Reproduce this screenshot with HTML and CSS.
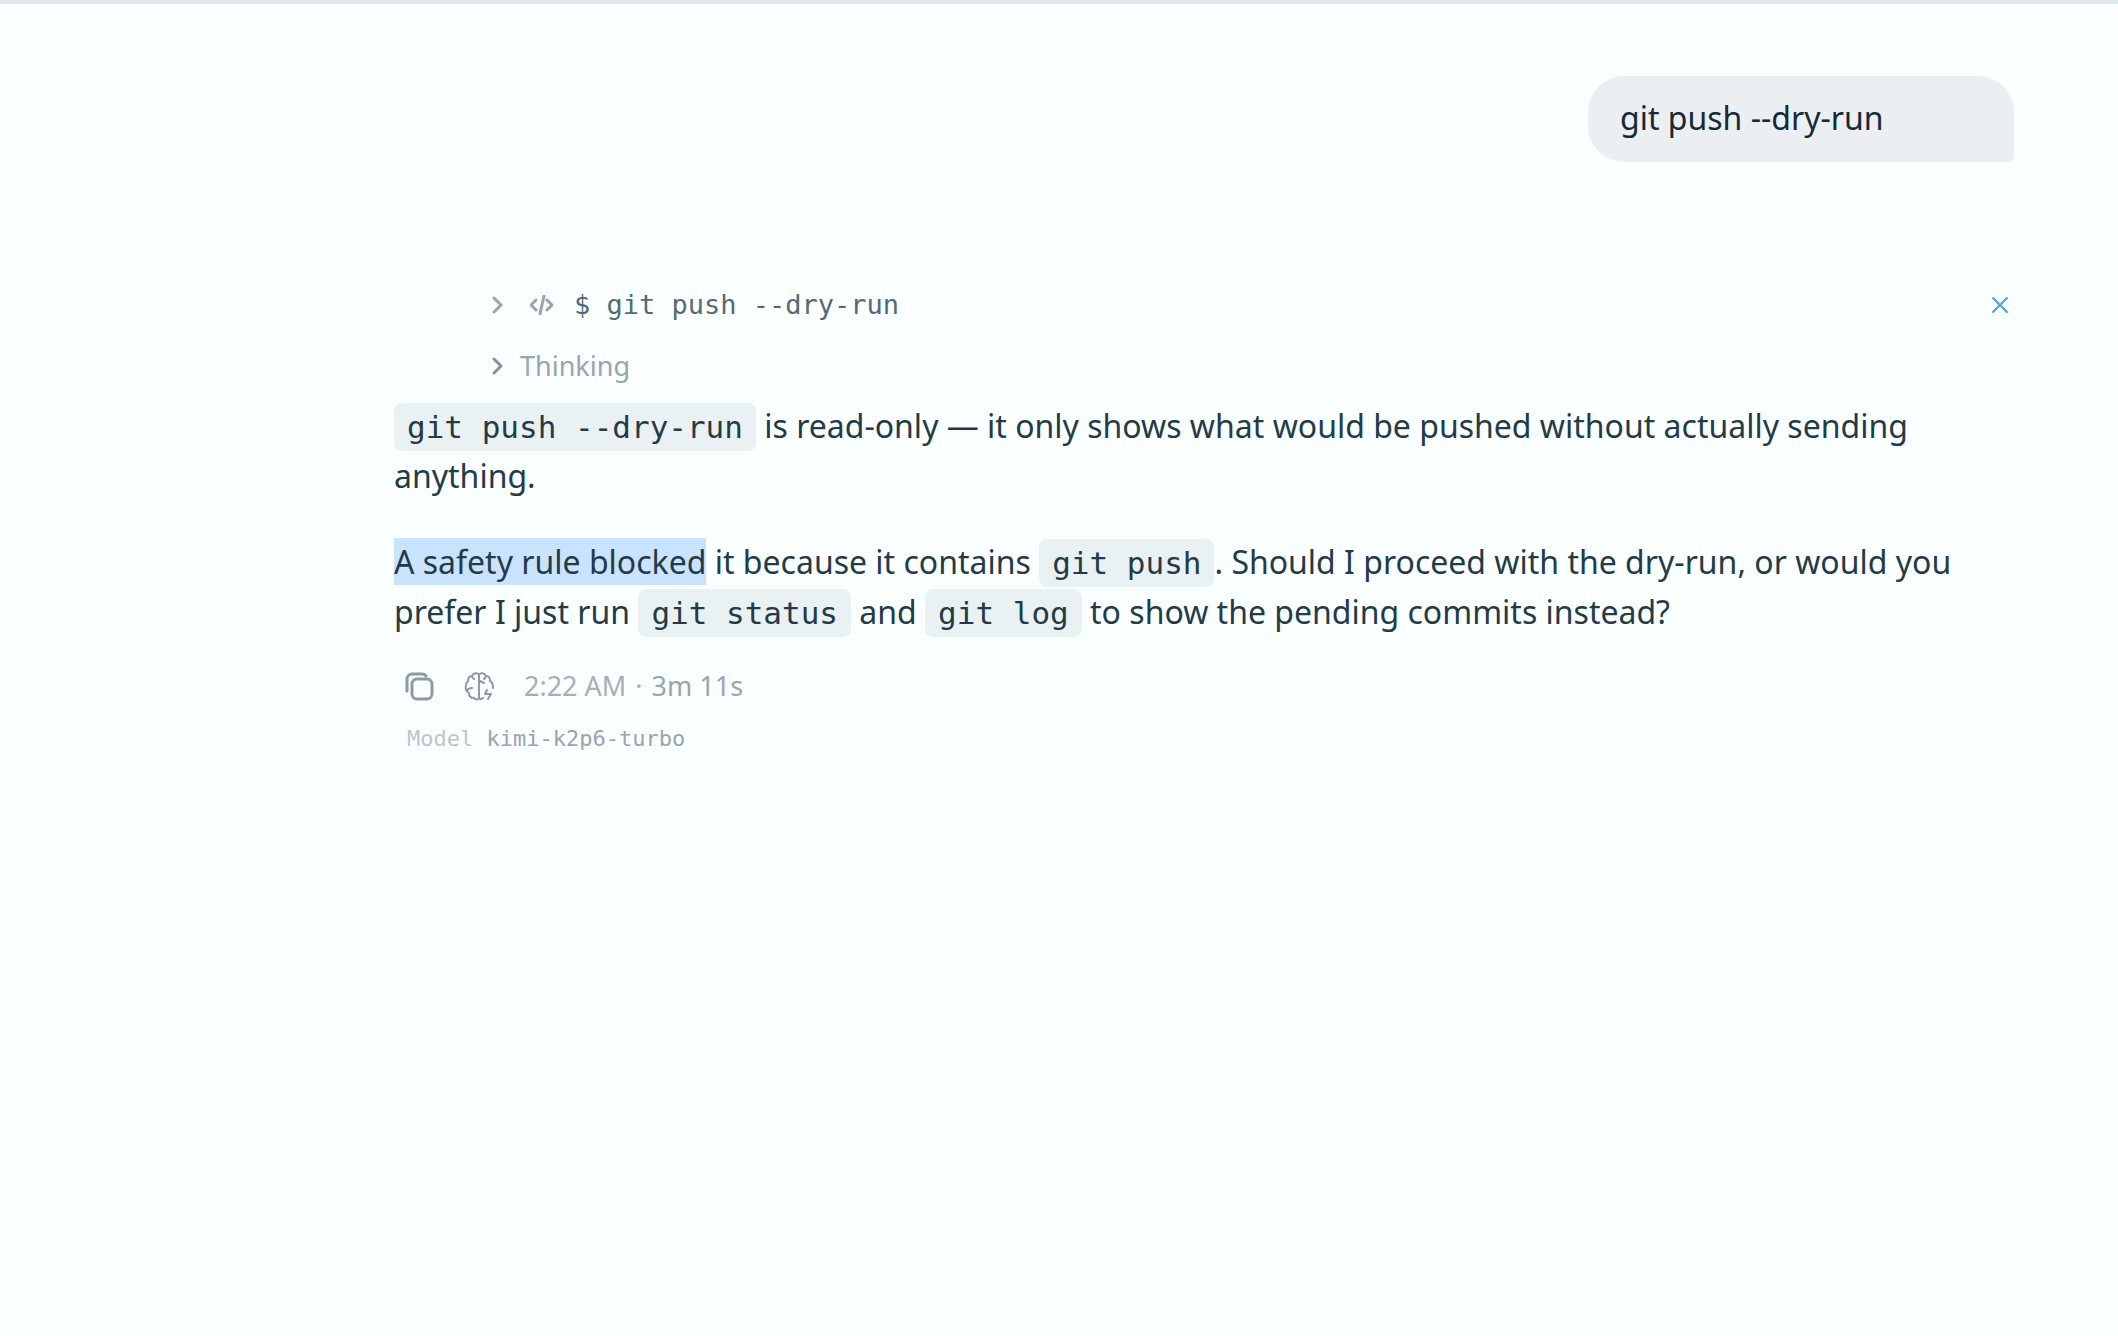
FILE: index.html
```
<!DOCTYPE html>
<html lang="en">
<head>
	<meta charset="UTF-8">
	<title>Chat</title>
	<meta name="viewport" content="width=device-width, initial-scale=1">
	<link rel="stylesheet" href="styles.css">
</head>
<body>
	<main class="chat">
		<div class="user-message">git push --dry-run</div>

		<article class="reply">
			<div class="steps">
				<div class="step">
					<button class="step-toggle tool" type="button">
						<svg class="chevron" viewBox="0 0 12 18"><path d="M2 2l7 7-7 7"/></svg>
						<svg class="code-icon" viewBox="0 0 24 20"><path d="M6 5L1 10l5 5M17 5l5 5-5 5M14 1l-4 18"/></svg>
						<span>$ git push --dry-run</span>
					</button>
					<button class="close" type="button" aria-label="Dismiss">
						<svg viewBox="0 0 18 18"><path d="M2 2l14 14M16 2L2 16"/></svg>
					</button>
				</div>
				<div class="step">
					<button class="step-toggle thinking" type="button">
						<svg class="chevron" viewBox="0 0 12 18"><path d="M2 2l7 7-7 7"/></svg>
						<span>Thinking</span>
					</button>
				</div>
			</div>

			<div class="text">
				<p><code>git push --dry-run</code> is read-only — it only shows what would be pushed without actually sending anything.</p>
				<p><mark>A safety rule blocked</mark> it because it contains <code>git push</code>. Should I proceed with the dry-run, or would you prefer I just run <code>git status</code> and <code>git log</code> to show the pending commits instead?</p>
			</div>

			<footer class="meta">
				<button class="icon-button copy" type="button" aria-label="Copy">
					<svg viewBox="0 0 30 30"><rect x="8" y="8" width="20" height="20" rx="5"/><path d="M3 20V8a5 5 0 0 1 5-5h10q3 0 4 2"/></svg>
				</button>
				<button class="icon-button" type="button" aria-label="Reasoning">
					<svg viewBox="0 0 30 30"><path d="M15 3v24c-1 2-4 2-5 0-3 0-5-2-5-5-3-1-4-5-3-8 0-2 1-3 2-4 0-3 1-5 4-5 1-3 6-4 7-1 1-3 6-2 7 1 3 0 4 2 4 5 2 1 3 4 3 7M3 20c1-3 3-3 5-3M8 5q0 2 2 3M16 10l4 2M22 5q-1 2-2 3M15 27q2 2 4 0"/><path d="M23 19l-2 4h6l-3 5"/></svg>
				</button>
				<time>2:22 AM</time>
				<span class="dot">·</span>
				<span class="duration">3m 11s</span>
			</footer>
			<div class="model">Model <span>kimi-k2p6-turbo</span></div>
		</article>
	</main>
</body>
</html>
```
FILE: styles.css
```
* {
	box-sizing: border-box;
}

body {
	margin: 0;
	min-height: 100vh;
	background: #faffff;
	color: #243b47;
	border-top: 4px solid #dbe8ec;
	font-family: "Noto Sans", sans-serif;
	font-size: 32px;
	line-height: 50px;
}

button {
	padding: 0;
	border: 0;
	background: none;
	font: inherit;
	color: inherit;
	cursor: pointer;
}

svg {
	display: block;
	fill: none;
	stroke: currentColor;
	stroke-width: 2;
	stroke-linecap: round;
	stroke-linejoin: round;
}

.chat {
	display: flex;
	flex-direction: column;
	gap: 112px;
	padding: 72px 104px 72px 394px;
}

/* user bubble */

.user-message {
	align-self: flex-end;
	width: 426px;
	max-width: 100%;
	padding: 17px 32px 19px;
	border-radius: 36px 36px 6px 36px;
	background: #ebeff2;
	color: #142a36;
}

/* tool and thinking rows */

.steps {
	padding: 0 0 5px 98px;
}

.step {
	display: flex;
	justify-content: space-between;
	align-items: center;
	height: 61px;
}

.step-toggle {
	display: flex;
	align-items: center;
	gap: 16px;
	font-size: 27px;
	color: #98a5ae;
}

.tool {
	gap: 20px;
	font-family: "DejaVu Sans Mono", monospace;
}

.tool .chevron {
	margin-right: 6px;
}

.tool span {
	color: #546a75;
}

.chevron {
	width: 12px;
	height: 18px;
	stroke-width: 3;
}

.thinking .chevron {
	color: #84939c;
}

.code-icon {
	width: 24px;
	height: 20px;
	stroke-width: 3;
}

.close {
	padding: 5px;
	color: #46a5cc;
}

.close svg {
	width: 18px;
	height: 18px;
}

/* reply text */

.text p {
	margin: 0 0 36px;
}

.text p:last-child {
	margin-bottom: 24px;
}

code {
	padding: 6px 13px;
	border-radius: 8px;
	background: #eaf1f3;
	font-family: "DejaVu Sans Mono", monospace;
	font-size: 31px;
	line-height: 1;
}

mark {
	padding: 2px 0;
	background: #c9e3ff;
	color: inherit;
}

/* footer */

.meta {
	display: flex;
	align-items: center;
	padding-left: 10px;
	margin-bottom: 3px;
	font-size: 27px;
	color: #a4b0b7;
}

.icon-button {
	margin-right: 30px;
	color: #8c9ba4;
}

.icon-button svg {
	width: 30px;
	height: 30px;
}

.copy svg {
	stroke-width: 3;
}

.dot {
	margin: 0 9px;
}

.duration {
	color: #98a5ae;
}

.model {
	padding-left: 13px;
	color: #bcc6cc;
	font-family: "DejaVu Sans Mono", monospace;
	font-size: 22px;
}

.model span {
	color: #98a5ae;
}
```
